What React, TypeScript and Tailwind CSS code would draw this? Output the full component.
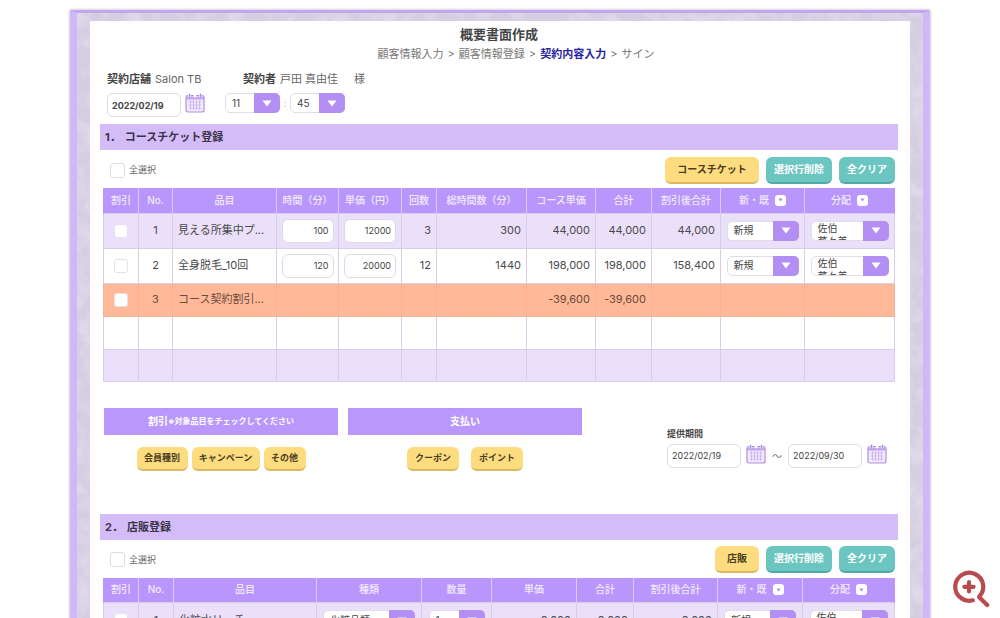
import type { ReactNode } from "react";
import clsx from "clsx";

const courseColumns = [
  { label: "割引", width: 35 },
  { label: "No.", width: 34 },
  { label: "品目", width: 104 },
  { label: "時間（分）", width: 62 },
  { label: "単価（円）", width: 63 },
  { label: "回数", width: 35 },
  { label: "総時間数（分）", width: 90 },
  { label: "コース単価", width: 69 },
  { label: "合計", width: 56 },
  { label: "割引後合計", width: 69 },
  { label: "新・既", width: 84, toggle: true },
  { label: "分配", width: 90, toggle: true },
];

const shopColumns = [
  { label: "割引", width: 35 },
  { label: "No.", width: 35 },
  { label: "品目", width: 143 },
  { label: "種類", width: 105 },
  { label: "数量", width: 70 },
  { label: "単価", width: 85 },
  { label: "合計", width: 57 },
  { label: "割引後合計", width: 84 },
  { label: "新・既", width: 85, toggle: true },
  { label: "分配", width: 92, toggle: true },
];

const courseRows = [
  { no: 1, name: "見える所集中プ...", minutes: "100", price: "12000", count: "3", total: "300", unit: "44,000", sum: "44,000", after: "44,000" },
  { no: 2, name: "全身脱毛_10回", minutes: "120", price: "20000", count: "12", total: "1440", unit: "198,000", sum: "198,000", after: "158,400" },
];

type Column = { label: string; width: number; toggle?: boolean };

function CalendarIcon() {
  return (
    <svg viewBox="0 0 20 20" className="size-5" fill="none" aria-hidden="true">
      <rect x="1" y="2.5" width="18" height="16.5" rx="2" fill="#f3ebff" stroke="#b08ee0" strokeWidth="1.2" />
      <path d="M1 3.5h18v3H1z" fill="#c3a3ee" />
      <path d="M4.5 0.8v3.4M10 0.8v3.4M15.5 0.8v3.4" stroke="#fff" strokeWidth="2.6" />
      <path d="M4.5 0.8v3.4M15.5 0.8v3.4" stroke="#a883dd" strokeWidth="1.4" />
      <path d="M3.5 9h13M3.5 12h13M3.5 15h13M5.5 7v10M8.5 7v10M11.5 7v10M14.5 7v10" stroke="#c9b2ea" strokeWidth="0.8" />
    </svg>
  );
}

function CalendarButton({ label }: { label: string }) {
  return (
    <button type="button" aria-label={label} className="self-start">
      <CalendarIcon />
    </button>
  );
}

function DateInput({ label, value, bold }: { label: string; value: string; bold?: boolean }) {
  return (
    <input
      type="text"
      aria-label={label}
      defaultValue={value}
      className={clsx(
        "h-6 w-[74px] rounded-md border border-[#dedce2] bg-white px-1 text-[9px] text-[#444]",
        bold && "font-bold"
      )}
    />
  );
}

function Arrow() {
  return (
    <span className="pointer-events-none absolute inset-y-0 right-0 flex w-[26px] items-center justify-center rounded-r-[5px] bg-[#b48ff3]">
      <svg viewBox="0 0 10 7" className="h-[7px] w-[10px]" aria-hidden="true">
        <path d="M0.5 0.5h9L5 6.5z" fill="#fff" />
      </svg>
    </span>
  );
}

function Select({ label, value, className }: { label: string; value: string; className: string }) {
  return (
    <div className={clsx("relative h-5", className)}>
      <select
        aria-label={label}
        className="block h-full w-full appearance-none rounded-[5px] border border-[#e0dce8] bg-white pr-7 pl-1.5 text-[10px] text-[#444]"
      >
        <option>{value}</option>
      </select>
      <Arrow />
    </div>
  );
}

function StaffSelect({ label }: { label: string }) {
  return (
    <div className="relative mx-auto h-5 w-[78px]">
      <div
        aria-hidden="true"
        className="h-full overflow-hidden rounded-[5px] border border-[#e0dce8] bg-white pr-7 pl-1.5 text-left text-[10px] leading-[13px] text-[#444]"
      >
        佐伯
        <br />
        菜々美
      </div>
      <Arrow />
      <select aria-label={label} className="absolute inset-0 h-full w-full opacity-0">
        <option>佐伯 菜々美</option>
      </select>
    </div>
  );
}

function Checkbox({ label }: { label: string }) {
  return (
    <input
      type="checkbox"
      aria-label={label}
      className="mx-auto block size-[14px] appearance-none rounded-[3px] border border-[#e6e0ee] bg-white checked:bg-[#b48ff3]"
    />
  );
}

function ActionButton({ children, color, className }: { children: ReactNode; color: "yellow" | "teal"; className: string }) {
  return (
    <button
      type="button"
      className={clsx(
        "rounded-md border-b-2 text-center font-bold whitespace-nowrap",
        color === "yellow" ? "border-[#dcb960] bg-[#fddc80] text-[#4a3d20]" : "border-[#51aaa6] bg-[#6bc5c1] text-white",
        className
      )}
    >
      {children}
    </button>
  );
}

function SectionTitle({ no, children }: { no: string; children: ReactNode }) {
  return (
    <h2 className="flex gap-1 bg-[#d3bcf7] pl-[5px] text-[11px] leading-[26px] font-bold text-[#3b3448]">
      <span>{no}</span>
      <span>{children}</span>
    </h2>
  );
}

function Toolbar({ action, actionClass }: { action: string; actionClass: string }) {
  return (
    <div className="flex h-10 items-center justify-between pr-[3px] pl-[10px]">
      <label className="flex items-center gap-1 text-[9px] text-[#666]">
        <input type="checkbox" className="size-[15px] appearance-none rounded-[3px] border border-[#dfdbe6] bg-white" />
        全選択
      </label>
      <div className="flex gap-[7px] text-[10px]">
        <ActionButton color="yellow" className={clsx("h-[27px]", actionClass)}>{action}</ActionButton>
        <ActionButton color="teal" className="h-[27px] w-[66px]">選択行削除</ActionButton>
        <ActionButton color="teal" className="h-[27px] w-[56px]">全クリア</ActionButton>
      </div>
    </div>
  );
}

function TableHead({ columns }: { columns: Column[] }) {
  return (
    <>
      <colgroup>
        {columns.map((c) => (
          <col key={c.label} style={{ width: c.width }} />
        ))}
      </colgroup>
      <thead>
        <tr className="h-[25px] bg-[#b996fb] text-[10px] text-[#f3eaff]">
          {columns.map((c) => (
            <th key={c.label} className="border-x border-[#dcc9fd] p-0 font-medium whitespace-nowrap first:border-l-[#b996fb] last:border-r-[#b996fb]">
              {c.toggle ? (
                <span className="flex items-center justify-center gap-1.5">
                  {c.label}
                  <button type="button" aria-label={`${c.label}を一括変更`} className="flex size-[11px] items-center justify-center rounded-[3px] bg-white">
                    <svg viewBox="0 0 5 4" className="h-1 w-[5px]" aria-hidden="true">
                      <path d="M0.5 0.5h4L2.5 3.5z" fill="#a98bd8" />
                    </svg>
                  </button>
                </span>
              ) : (
                c.label
              )}
            </th>
          ))}
        </tr>
      </thead>
    </>
  );
}

const cell = "border border-[#d9cdea] p-0";
const numberCell = "border border-[#d9cdea] p-0 pr-[5px] text-right";

function CellInput({ label, value, className }: { label: string; value: string; className: string }) {
  return (
    <input
      type="text"
      aria-label={label}
      defaultValue={value}
      className={clsx("mx-auto block h-6 rounded-md border border-[#dedae4] bg-white pr-1 text-right text-[9px] text-[#444]", className)}
    />
  );
}

function CourseTable() {
  return (
    <table className="w-full table-fixed border-collapse text-[11px] text-[#4a4a4a]">
      <TableHead columns={courseColumns} />
      <tbody>
        {courseRows.map((r) => (
          <tr key={r.no} className="h-[35px] odd:bg-[#eae0f9]">
            <td className={cell}><Checkbox label={`${r.no}行目を割引対象にする`} /></td>
            <td className={clsx(cell, "text-center")}>{r.no}</td>
            <td className={clsx(cell, "pl-[5px] whitespace-nowrap")}>{r.name}</td>
            <td className={cell}><CellInput label="時間" value={r.minutes} className="w-[52px]" /></td>
            <td className={cell}><CellInput label="単価" value={r.price} className="w-[52px]" /></td>
            <td className={numberCell}>{r.count}</td>
            <td className={numberCell}>{r.total}</td>
            <td className={numberCell}>{r.unit}</td>
            <td className={numberCell}>{r.sum}</td>
            <td className={numberCell}>{r.after}</td>
            <td className={cell}><Select label="新・既" value="新規" className="mx-auto w-[72px]" /></td>
            <td className={cell}><StaffSelect label="分配" /></td>
          </tr>
        ))}
        <tr className="h-[33px] bg-[#ffb998] text-[#6a4a3c]">
          <td className="border border-[#f3b39a] p-0"><Checkbox label="3行目を割引対象にする" /></td>
          <td className="border border-[#f3b39a] p-0 text-center">3</td>
          <td className="border border-[#f3b39a] p-0 pl-[5px] whitespace-nowrap">コース契約割引...</td>
          <td className="border border-[#f3b39a]" />
          <td className="border border-[#f3b39a]" />
          <td className="border border-[#f3b39a]" />
          <td className="border border-[#f3b39a]" />
          <td className="border border-[#f3b39a] p-0 pr-[5px] text-right">-39,600</td>
          <td className="border border-[#f3b39a] p-0 pr-[5px] text-right">-39,600</td>
          <td className="border border-[#f3b39a]" />
          <td className="border border-[#f3b39a]" />
          <td className="border border-[#f3b39a]" />
        </tr>
        <tr className="h-[33px]">
          {courseColumns.map((c) => <td key={c.label} className={cell} />)}
        </tr>
        <tr className="h-8 bg-[#eae0f9]">
          {courseColumns.map((c) => <td key={c.label} className={cell} />)}
        </tr>
      </tbody>
    </table>
  );
}

function ShopTable() {
  return (
    <table className="w-full table-fixed border-collapse text-[11px] text-[#4a4a4a]">
      <TableHead columns={shopColumns} />
      <tbody>
        <tr className="h-[35px] bg-[#eae0f9]">
          <td className={cell}><Checkbox label="1行目を割引対象にする" /></td>
          <td className={clsx(cell, "text-center")}>1</td>
          <td className={clsx(cell, "pl-[5px]")}>化粧水リーチ</td>
          <td className={cell}><Select label="種類" value="化粧品類" className="mx-auto w-[92px]" /></td>
          <td className={cell}><Select label="数量" value="1" className="mx-auto w-[56px]" /></td>
          <td className={numberCell}>8,000</td>
          <td className={numberCell}>8,000</td>
          <td className={numberCell}>8,000</td>
          <td className={cell}><Select label="新・既" value="新規" className="mx-auto w-[72px]" /></td>
          <td className={cell}><StaffSelect label="分配" /></td>
        </tr>
      </tbody>
    </table>
  );
}

function MarbleTexture() {
  return (
    <svg className="absolute inset-0 h-full w-full opacity-25" aria-hidden="true">
      <filter id="marble">
        <feTurbulence type="fractalNoise" baseFrequency="0.06" numOctaves="3" seed="4" />
        <feColorMatrix values="0 0 0 0 1  0 0 0 0 1  0 0 0 0 1  2.4 0 0 0 -0.9" />
      </filter>
      <rect width="100%" height="100%" filter="url(#marble)" />
    </svg>
  );
}

export default function App() {
  return (
    <div className="relative h-screen overflow-hidden bg-white px-[70px] pt-[10px] font-['Inter','Noto_Sans_CJK_JP',sans-serif]">
      <div className="relative min-h-full border-x-[7px] border-t-[3px] border-[#d0b7f6] border-t-[#c4a6ee] bg-[#d5cee3] px-[13px] pt-2 shadow-[0_0_3px_rgba(0,0,0,0.3)]">
        <MarbleTexture />
        <main className="relative bg-white pt-[5px] pr-3 pb-10 pl-[10px]">
          <header className="text-center">
            <h1 className="text-[13px] leading-4 font-bold text-[#444]">概要書面作成</h1>
            <nav className="mt-1 flex justify-center gap-1 pl-[34px] text-[11px] leading-4 text-[#777]">
              <span>顧客情報入力</span>
              <span>&gt;</span>
              <span>顧客情報登録</span>
              <span>&gt;</span>
              <span className="font-bold text-[#2a1fa0]">契約内容入力</span>
              <span>&gt;</span>
              <span>サイン</span>
            </nav>
          </header>

          <div className="mt-[9px] flex pl-[7px] text-[11px] leading-4 text-[#666]">
            <p className="w-[136px]"><b className="mr-1 text-[#444]">契約店舗</b>Salon TB</p>
            <p><b className="mr-1 text-[#444]">契約者</b>戸田 真由佳</p>
            <p className="ml-4">様</p>
          </div>
          <div className="mt-1.5 flex pl-[7px]">
            <DateInput label="契約日" value="2022/02/19" bold />
            <div className="ml-1 flex"><CalendarButton label="契約日を選ぶ" /></div>
            <Select label="時" value="11" className="ml-5 w-[55px]" />
            <span className="w-[10px] text-center text-[10px] leading-5 text-[#bbb]">:</span>
            <Select label="分" value="45" className="w-[55px]" />
          </div>

          <section className="mt-[7px]">
            <SectionTitle no="1．">コースチケット登録</SectionTitle>
            <Toolbar action="コースチケット" actionClass="w-[94px]" />
            <div className="-mt-0.5 pr-[3px] pl-[3px]"><CourseTable /></div>

            <div className="mt-[26px] flex h-[106px] items-start pr-[11px] pl-1">
              <div className="w-[234px]">
                <h3 className="flex h-[27px] items-center justify-center bg-[#ba97fb] text-[10px] font-bold text-white">
                  割引<span className="text-[8px]">※対象品目をチェックしてください</span>
                </h3>
                <div className="mt-3 flex justify-center gap-1 text-[9px]">
                  <ActionButton color="yellow" className="h-6 w-[51px]">会員種別</ActionButton>
                  <ActionButton color="yellow" className="h-6 w-[68px]">キャンペーン</ActionButton>
                  <ActionButton color="yellow" className="h-6 w-[42px]">その他</ActionButton>
                </div>
              </div>
              <div className="ml-[10px] w-[234px]">
                <h3 className="flex h-[27px] items-center justify-center bg-[#ba97fb] text-[10px] font-bold text-white">支払い</h3>
                <div className="mt-3 flex justify-center gap-3 text-[9px]">
                  <ActionButton color="yellow" className="h-6 w-[52px]">クーポン</ActionButton>
                  <ActionButton color="yellow" className="h-6 w-[52px]">ポイント</ActionButton>
                </div>
              </div>
              <div className="mt-5 ml-auto">
                <p className="text-[9px] leading-3 font-bold text-[#444]">提供期間</p>
                <div className="mt-1 flex gap-[5px]">
                  <DateInput label="提供期間の開始日" value="2022/02/19" />
                  <CalendarButton label="開始日を選ぶ" />
                  <span className="w-3 text-center text-[10px] leading-6 text-[#777]">～</span>
                  <DateInput label="提供期間の終了日" value="2022/09/30" />
                  <CalendarButton label="終了日を選ぶ" />
                </div>
              </div>
            </div>
          </section>

          <section>
            <SectionTitle no="2．">店販登録</SectionTitle>
            <Toolbar action="店販" actionClass="w-[44px]" />
            <div className="-mt-0.5 pr-[3px] pl-[3px]"><ShopTable /></div>
          </section>
        </main>
      </div>

      <button type="button" aria-label="拡大" className="absolute right-[10px] bottom-[10px]">
        <svg viewBox="0 0 38 38" className="size-[38px]" fill="none" stroke="#b94a4d" strokeWidth="4.2" strokeLinecap="round" aria-hidden="true">
          <path d="M20.8 30.3A14 14 0 1 1 27.4 26.4" />
          <path d="M27.2 27.3L35.2 35" />
          <path d="M17 12.2v9.2M12.4 16.8h9.2" />
        </svg>
      </button>
    </div>
  );
}
